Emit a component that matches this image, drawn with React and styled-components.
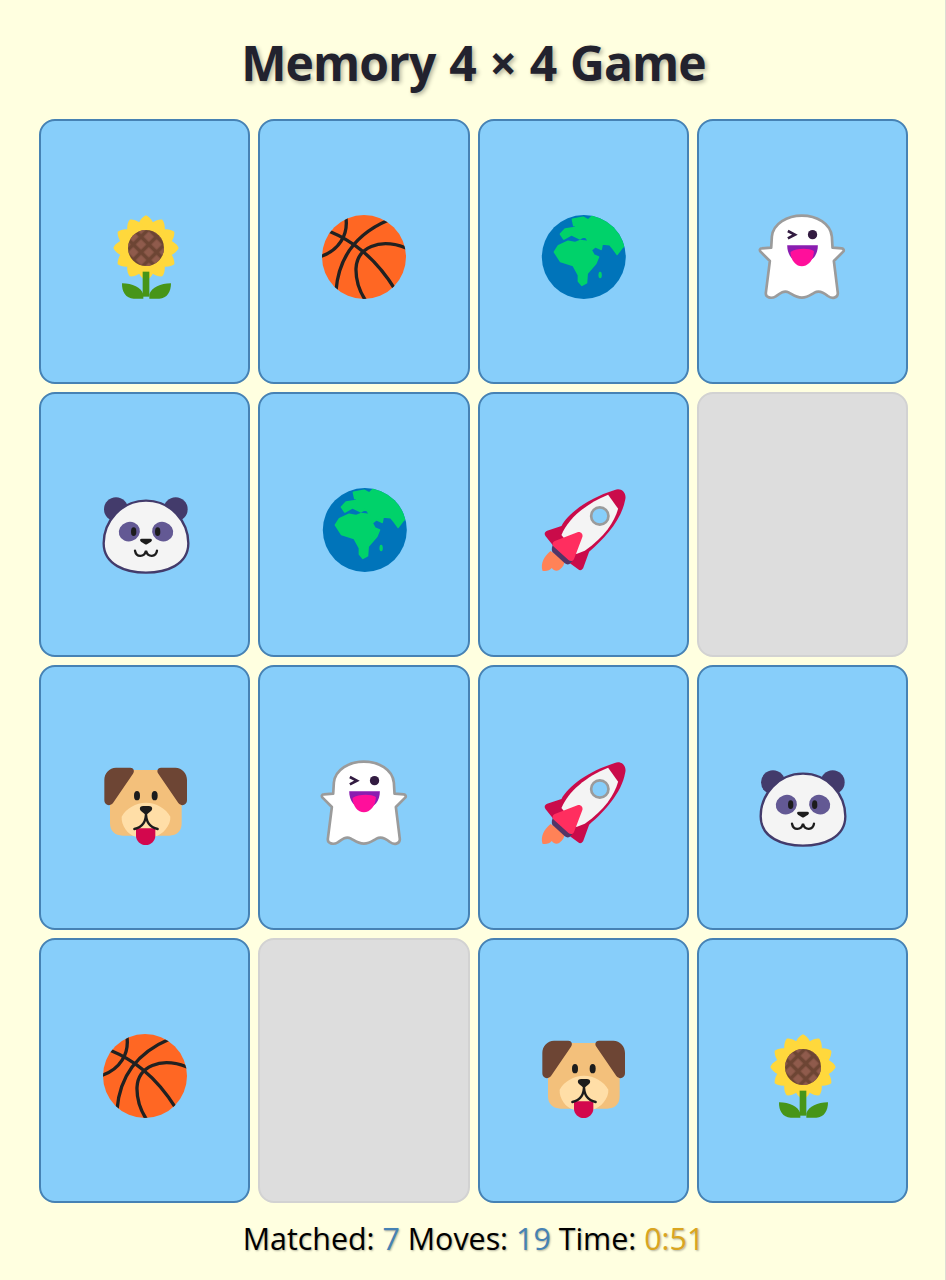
import React from 'react';
import styled, { createGlobalStyle } from 'styled-components';

const GlobalStyle = createGlobalStyle`
  html, body {
    margin: 0;
    background: #ffffe0;
    font-family: "Open Sans", "Noto Sans", "Liberation Sans", sans-serif;
  }
`;

const Page = styled.div`
  width: 946px;
  height: 1280px;
  box-sizing: border-box;
  padding: 32px 37px 0 39px;
  border-right: 1px solid #dcdcd4;
  overflow: hidden;
`;

const Title = styled.h1`
  margin: 0 0 26px;
  font-size: 48px;
  line-height: 61px;
  font-weight: 700;
  letter-spacing: -0.9px;
  word-spacing: 2.2px;
  text-align: center;
  color: #22222e;
  text-shadow: 2px 2px 4px rgba(0, 0, 0, 0.3);
`;

const Board = styled.div`
  display: grid;
  grid-template-columns: repeat(4, 1fr);
  grid-auto-rows: 265px;
  gap: 8px;
`;

const Card = styled.div`
  box-sizing: border-box;
  display: flex;
  align-items: center;
  justify-content: center;
  padding-top: 11px;
  border: 2px solid ${(p) => (p.$gone ? '#d2d2d2' : '#4682b4')};
  border-radius: 16px;
  background: ${(p) => (p.$gone ? '#dddddd' : '#87cefa')};
`;

const Emoji = styled.svg`
  display: block;
  width: 96px;
  height: 96px;
`;

const Status = styled.div`
  margin-top: 14px;
  font-size: 30.4px;
  line-height: 44px;
  text-align: center;
  color: #000;
  text-shadow: 1px 1px 2px rgba(0, 0, 0, 0.3);
`;

const Value = styled.span`
  color: ${(p) => p.$color};
`;

// the drawings use a 288 box, so one unit is a third of a screen pixel
const Sunflower = () => (
  <Emoji viewBox="18 27 288 288">
    <defs>
      <pattern id="seeds" width="33" height="33" patternUnits="userSpaceOnUse" patternTransform="rotate(45 165 144)">
        <rect x="4" y="4" width="22" height="22" fill="#8f5b4c" />
      </pattern>
    </defs>
    {Array.from({ length: 12 }, (_, i) => (
      <path
        key={i}
        d="M165 46C180 52 194 74 194 104H136C136 74 150 52 165 46Z"
        fill="#ffd83c"
        transform={`rotate(${i * 30} 165 144)`}
      />
    ))}
    <path d="M155 215h20v75h-20z" fill="#479518" />
    <path d="M93 250C125 250 150 262 157 283V296H128C105 296 92 275 93 250ZM240 250C208 250 183 262 175 283V296H205C228 296 240 275 240 250Z" fill="#479518" />
    <circle cx="165" cy="144" r="54" fill="#6d4534" />
    <circle cx="165" cy="144" r="54" fill="url(#seeds)" />
  </Emoji>
);

const Basketball = () => (
  <Emoji viewBox="17 27 288 288">
    <defs>
      <clipPath id="ball-edge">
        <circle cx="161" cy="171" r="126" />
      </clipPath>
    </defs>
    <circle cx="161" cy="171" r="126" fill="#ff6723" />
    <g fill="none" stroke="#212121" strokeWidth="10" clipPath="url(#ball-edge)">
      <path d="M106 48C116 105 85 152 30 170" />
      <path d="M55 93C120 120 190 165 254 268" />
      <path d="M235 60C140 100 85 170 77 272" />
      <path d="M292 146C205 110 140 145 137 205C136 240 145 270 166 302" />
    </g>
  </Emoji>
);

const Globe = () => (
  <Emoji viewBox="15.6 27 288 288">
    <defs>
      <clipPath id="globe-edge">
        <circle cx="162" cy="171" r="126" />
      </clipPath>
    </defs>
    <circle cx="162" cy="171" r="126" fill="#0074ba" />
    <g clipPath="url(#globe-edge)" fill="#00d26a">
      <path
        d="M128 58L160 52L175 60L190 46L240 55L300 120L278 142L262 163L250 146L240 134L217 132L214 148L197 140L184 150L192 165L206 171L198 190L172 220L170 248L156 256L146 244L146 225L130 196L92 184L74 156L86 137L115 124L135 128L150 122L178 125L165 108L150 116L125 104L102 117L92 102L106 87L135 83L146 70L132 77Z"
        stroke="#00d26a"
        strokeWidth="5"
        strokeLinejoin="round"
      />
      <ellipse cx="211" cy="225" rx="5" ry="10" />
    </g>
  </Emoji>
);

const Ghost = () => (
  <Emoji viewBox="14.4 27 288 288">
    <path
      d="M68 110C72 70 115 47 158 47C202 47 244 70 248 110L250 143L278 145C284 146 285 152 282 155L254 183L266 280C266 295 248 297 236 288C224 278 210 270 196 278C182 286 175 293 158 293C140 293 132 285 118 277C104 270 92 280 80 289C66 297 48 293 50 278L62 183L34 155C30 150 32 145 38 145L66 143Z"
      fill="#fff"
      stroke="#9b9b9b"
      strokeWidth="8"
      strokeLinejoin="round"
    />
    <circle cx="190" cy="104" r="14" fill="#321b41" />
    <path d="M116 93L137 104L116 115" fill="none" stroke="#321b41" strokeWidth="8" />
    <path d="M114 136H206C206 165 190 187 160 187C130 187 114 165 114 136Z" fill="#8a1db0" />
    <path d="M124 156C140 145 178 143 194 153C194 180 176 199 158 199C140 199 124 180 124 156Z" fill="#ff0f9b" />
  </Emoji>
);

const Panda = () => (
  <Emoji viewBox="18 6 288 288">
    <circle cx="75" cy="88" r="36" fill="#433b6b" />
    <circle cx="254" cy="88" r="36" fill="#433b6b" />
    <path
      d="M165 62C240 62 292 125 292 190C292 255 225 278 165 278C105 278 38 255 38 190C38 125 90 62 165 62Z"
      fill="#f4f4f4"
      stroke="#433b6b"
      strokeWidth="7"
    />
    <ellipse cx="115" cy="155" rx="32" ry="29" fill="#635994" transform="rotate(-18 115 155)" />
    <ellipse cx="215" cy="155" rx="32" ry="29" fill="#635994" transform="rotate(18 215 155)" />
    <ellipse cx="128" cy="155" rx="8" ry="13" fill="#1c1c1c" />
    <ellipse cx="200" cy="155" rx="8" ry="13" fill="#1c1c1c" />
    <path d="M152 176H178C184 176 184 182 180 185L168 193C166 194 164 194 162 193L150 185C146 182 146 176 152 176Z" fill="#1c1c1c" />
    <path d="M132 212C136 233 160 232 165 212C170 232 195 233 198 212" fill="none" stroke="#1c1c1c" strokeWidth="7" strokeLinecap="round" />
  </Emoji>
);

const Rocket = () => (
  <Emoji viewBox="15.6 6 288 288">
    <path
      d="M255 30C275 22 292 40 286 60C275 120 225 175 178 215L160 265C155 272 150 272 145 268L100 235L50 172C40 160 46 155 52 152L95 138C115 100 175 55 255 30Z"
      fill="#ca0b4a"
    />
    <path d="M235 44L265 86C254 125 225 170 165 212L140 222L95 165C115 115 170 70 235 44Z" fill="#f4f4f4" />
    <circle cx="210" cy="108" r="26" fill="#87cefa" stroke="#9b9b9b" strokeWidth="8" />
    <path d="M38 272C32 250 42 230 62 213L104 240C105 252 100 262 88 270C80 274 72 272 66 264C60 272 48 274 38 272Z" fill="#ff8257" />
    <path d="M72 190L128 242L120 251C116 254 110 254 105 250L68 216C64 210 66 198 72 190Z" fill="#533566" />
    <path d="M75 183L143 157C152 154 160 162 158 170L133 236C130 244 122 245 116 240L72 200C66 194 68 186 75 183Z" fill="#ff2e5f" />
  </Emoji>
);

const Dog = () => (
  <Emoji viewBox="18 0 288 288">
    <path
      d="M95 45H235L272 150V205C272 228 258 242 235 242H190L165 258L135 242H95C72 242 57 228 57 205V150Z"
      fill="#f3c07b"
    />
    <path d="M92 185C105 160 135 143 165 143C195 143 225 160 238 185C240 210 215 240 190 245L165 258L135 245C110 240 90 210 92 185Z" fill="#ffdea7" />
    <path d="M75 38H118C128 38 132 48 126 56L66 144C56 156 40 150 40 135V75C40 55 55 38 75 38Z" fill="#6d4534" />
    <path d="M253 38H210C200 38 196 48 202 56L262 144C272 156 288 150 288 135V75C288 55 273 38 253 38Z" fill="#6d4534" />
    <ellipse cx="138" cy="122" rx="9" ry="14" fill="#1c1c1c" />
    <ellipse cx="191" cy="122" rx="9" ry="14" fill="#1c1c1c" />
    <path d="M135 220H193V242C193 258 179 270 164 270C149 270 135 258 135 242Z" fill="#d3074d" />
    <path d="M130 222C150 218 166 205 165 172C164 205 180 218 200 222" fill="none" stroke="#1c1c1c" strokeWidth="7" strokeLinecap="round" />
    <path d="M156 153H174C184 153 186 162 180 168L170 176C167 178 163 178 160 176L150 168C144 162 146 153 156 153Z" fill="#1c1c1c" />
  </Emoji>
);

const cards = [
  Sunflower, Basketball, Globe, Ghost,
  Panda, Globe, Rocket, null,
  Dog, Ghost, Rocket, Panda,
  Basketball, null, Dog, Sunflower,
];

export default function App() {
  return (
    <>
      <GlobalStyle />
      <Page>
        <Title>Memory 4 × 4 Game</Title>
        <Board>
          {cards.map((Icon, i) => (
            <Card key={i} $gone={!Icon}>
              {Icon && <Icon />}
            </Card>
          ))}
        </Board>
        <Status>
          Matched: <Value $color="#4682b4">7</Value> Moves: <Value $color="#4682b4">19</Value> Time:{' '}
          <Value $color="#daa520">0:51</Value>
        </Status>
      </Page>
    </>
  );
}
